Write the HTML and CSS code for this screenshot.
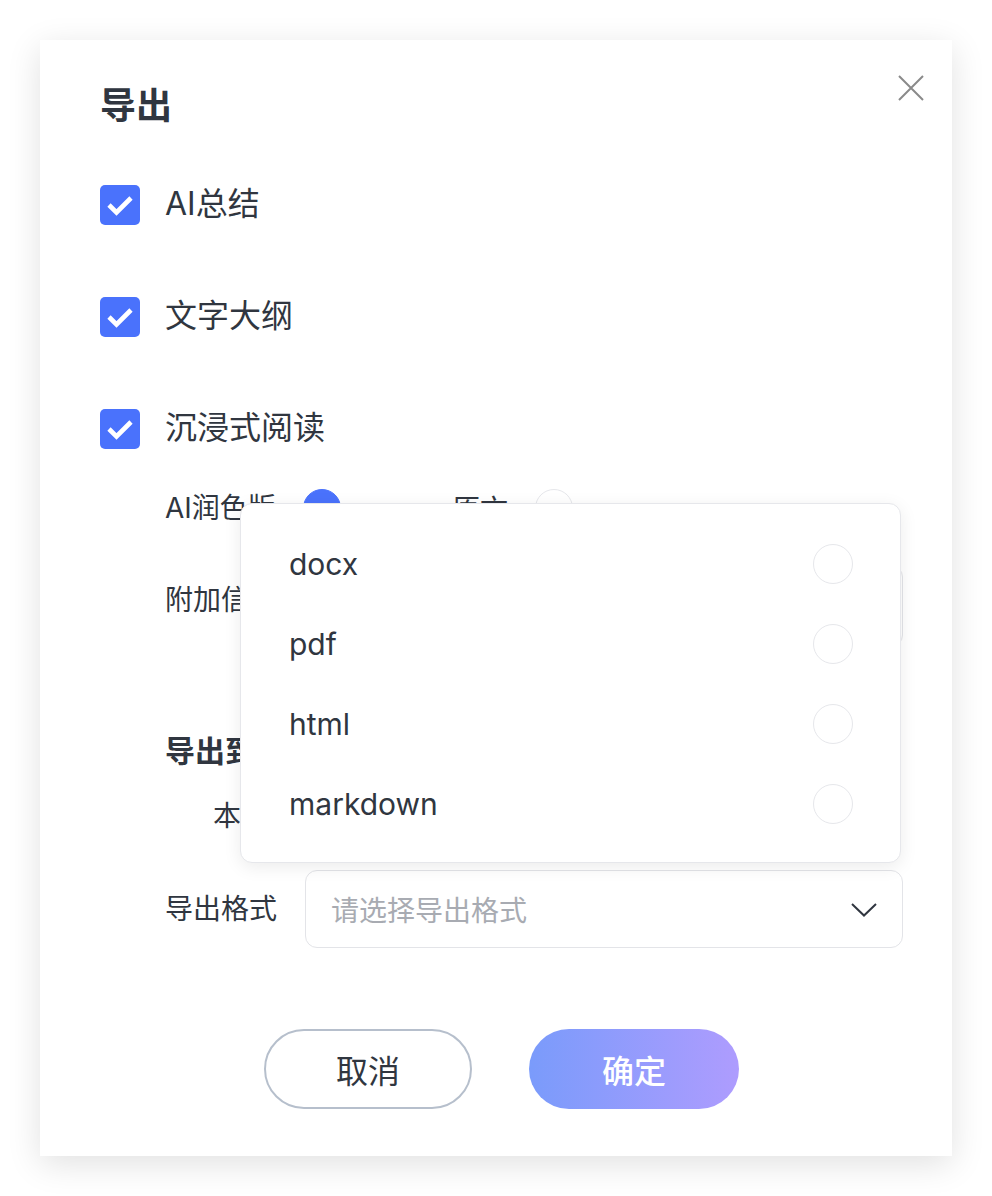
FILE: index.html
```html
<!DOCTYPE html>
<html lang="zh-CN">
<head>
    <meta charset="UTF-8">
    <meta name="viewport" content="width=device-width, initial-scale=1.0">
    <title>导出</title>
    <link rel="stylesheet" href="styles.css">
</head>
<body>
    <div class="dialog">
        <h2 class="dialogTitle">导出</h2>
        <button class="closeBtn" aria-label="关闭">
            <svg width="26" height="26" viewBox="0 0 26 26"><path d="M1 1 L25 25 M25 1 L1 25" stroke="#8a8a8a" stroke-width="2" fill="none"/></svg>
        </button>

        <ul class="checkList">
            <li><span class="checkBox"><svg width="40" height="40" viewBox="0 0 40 40"><path d="M9 20 L16.5 27.5 L31 13" stroke="#fff" stroke-width="4.6" fill="none"/></svg></span>AI总结</li>
            <li><span class="checkBox"><svg width="40" height="40" viewBox="0 0 40 40"><path d="M9 20 L16.5 27.5 L31 13" stroke="#fff" stroke-width="4.6" fill="none"/></svg></span>文字大纲</li>
            <li><span class="checkBox"><svg width="40" height="40" viewBox="0 0 40 40"><path d="M9 20 L16.5 27.5 L31 13" stroke="#fff" stroke-width="4.6" fill="none"/></svg></span>沉浸式阅读</li>
        </ul>

        <div class="subOptions">
            <div class="radioRow">
                <span class="formLabel">AI润色版</span>
                <span class="radio radioOn"><svg width="38" height="38" viewBox="0 0 38 38"><path d="M12 19 L17 24 L27 14" stroke="#fff" stroke-width="3" fill="none"/></svg></span>
                <span class="radioText">原文</span>
                <span class="radio"></span>
            </div>
            <div class="infoRow">
                <span class="formLabel">附加信息</span>
                <div class="textBox"></div>
            </div>

            <h3 class="sectionTitle">导出到</h3>
            <div class="localRow">本地</div>

            <div class="formatRow">
                <span class="formLabel">导出格式</span>
                <div class="selectBox">
                    <span class="placeholder">请选择导出格式</span>
                    <svg class="chevron" width="26" height="14" viewBox="0 0 26 14"><path d="M1 1 L13 12.5 L25 1" stroke="#303640" stroke-width="2" fill="none"/></svg>

                    <ul class="dropMenu">
                        <li>docx<span class="radio"></span></li>
                        <li>pdf<span class="radio"></span></li>
                        <li>html<span class="radio"></span></li>
                        <li>markdown<span class="radio"></span></li>
                    </ul>
                </div>
            </div>
        </div>

        <div class="dialogBtns">
            <button class="cancelBtn">取消</button>
            <button class="okBtn">确定</button>
        </div>
    </div>
</body>
</html>
```

FILE: styles.css
```css
*{margin: 0; padding: 0; box-sizing: border-box; list-style: none; font-family: "Inter", "Noto Sans CJK SC", sans-serif;}
body{background-color: #fff; color: #303640;}
button{border: none; background: none; cursor: pointer; font-family: inherit;}

.dialog{width: 912px; height: 1116px; margin: 40px; background-color: #fff; position: relative; padding: 46px 49px 0 60px; box-shadow: 0 8px 32px rgba(0,0,0,.12);}
.dialogTitle{font-size: 36px; line-height: 40px; font-weight: bold;}
.closeBtn{position: absolute; top: 35px; right: 28px; width: 26px; height: 26px; display: flex;}

.checkList{margin-top: 59px; display: flex; flex-direction: column; gap: 72px;}
.checkList>li{display: flex; align-items: center; height: 40px; font-size: 32px; line-height: 40px; padding-bottom: 3px;}
.checkBox{width: 40px; height: 40px; border-radius: 5px; background-color: #4a72fc; margin-right: 25px; display: flex; margin-top: 3px;}

.subOptions{padding-left: 65px;}
.formLabel{width: 140px; flex-shrink: 0; font-size: 28px; line-height: 40px;}
.radio{width: 40px; height: 40px; border-radius: 50%; border: 1.5px solid #e6e7eb; background-color: #fff; flex-shrink: 0; display: flex;}

.radioRow{margin-top: 40px; height: 38px; display: flex; align-items: center;}
.radioRow .formLabel{width: 138px;}
.radioRow .radio{width: 38px; height: 38px;}
.radioOn{background-color: #4a72fc; border-color: #4a72fc!important;}
.radioText{font-size: 28px; margin-left: 111px; margin-right: 27px;}

.infoRow{margin-top: 38px; display: flex; align-items: flex-start;}
.infoRow .formLabel{padding-top: 15px;}
.textBox{width: 598px; height: 82px; border: 1.5px solid #e3e4e8; border-radius: 12px;}

.sectionTitle{margin-top: 84px; font-size: 30px; line-height: 40px; font-weight: bold;}
.localRow{margin-top: 25px; margin-left: 48px; height: 40px; line-height: 40px; font-size: 28px;}

.formatRow{margin-top: 34px; display: flex; align-items: center;}
.selectBox{width: 598px; height: 78px; border: 1.5px solid #e3e4e8; border-radius: 12px; display: flex; align-items: center; justify-content: space-between; padding: 0 25px 0 25px; position: relative;}
.placeholder{font-size: 28px; color: #a8abb2;}
.chevron{margin-top: 2px;}

.dropMenu{position: absolute; left: -66px; bottom: 84px; width: 661px; height: 360px; background-color: #fff; border: 1.5px solid #e6e7eb; border-radius: 12px; box-shadow: 0 4px 18px rgba(0,0,0,.08); padding: 20px 47px 0 48px;}
.dropMenu>li{height: 80px; display: flex; align-items: center; justify-content: space-between; font-size: 30px;}

.dialogBtns{margin-top: 81px; display: flex; justify-content: center; gap: 57px;}
.cancelBtn{width: 208px; height: 80px; border: 2px solid #b6bfcc; border-radius: 40px; font-size: 32px; color: #303640;}
.okBtn{width: 210px; height: 80px; border-radius: 40px; font-size: 32px; color: #fff; font-weight: 500; background: linear-gradient(90deg, #7a9bfb, #ae9cfe);}
```
